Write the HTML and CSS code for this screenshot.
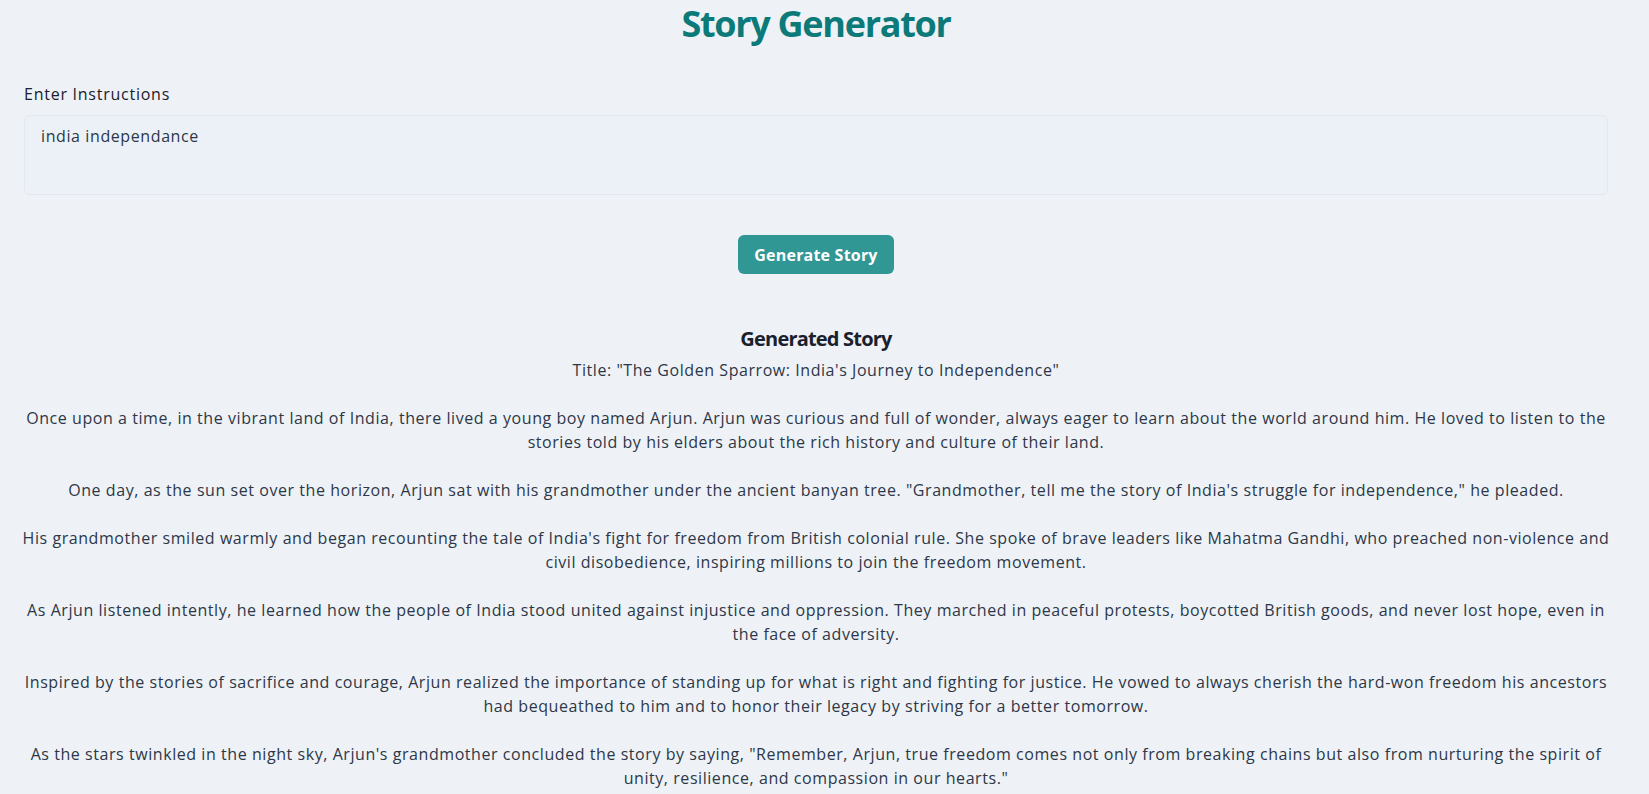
FILE: index.html
```html
<!DOCTYPE html>
<html lang="en">
<head>
<meta charset="utf-8">
<title>Story Generator</title>
<link rel="stylesheet" href="styles.css">
</head>
<body>
<main class="page">
  <h1 class="title">Story Generator</h1>
  <section class="form">
    <label class="label" for="instructions">Enter Instructions</label>
    <textarea id="instructions" class="input">india independance</textarea>
    <div class="actions">
      <button class="btn" type="button">Generate Story</button>
    </div>
  </section>
  <section class="result">
    <h2 class="result-heading">Generated Story</h2>
    <p class="story">Title: "The Golden Sparrow: India's Journey to Independence"

Once upon a time, in the vibrant land of India, there lived a young boy named Arjun. Arjun was curious and full of wonder, always eager to learn about the world around him. He loved to listen to the stories told by his elders about the rich history and culture of their land.

One day, as the sun set over the horizon, Arjun sat with his grandmother under the ancient banyan tree. "Grandmother, tell me the story of India's struggle for independence," he pleaded.

His grandmother smiled warmly and began recounting the tale of India's fight for freedom from British colonial rule. She spoke of brave leaders like Mahatma Gandhi, who preached non-violence and civil disobedience, inspiring millions to join the freedom movement.

As Arjun listened intently, he learned how the people of India stood united against injustice and oppression. They marched in peaceful protests, boycotted British goods, and never lost hope, even in the face of adversity.

Inspired by the stories of sacrifice and courage, Arjun realized the importance of standing up for what is right and fighting for justice. He vowed to always cherish the hard-won freedom his ancestors had bequeathed to him and to honor their legacy by striving for a better tomorrow.

As the stars twinkled in the night sky, Arjun's grandmother concluded the story by saying, "Remember, Arjun, true freedom comes not only from breaking chains but also from nurturing the spirit of unity, resilience, and compassion in our hearts."</p>
  </section>
</main>
</body>
</html>
```

FILE: styles.css
```css
html {
  scrollbar-width: none;
}

body {
  margin: 0;
  background: #eef2f6;
  color: #1a202c;
  font-family: "Open Sans", "Liberation Sans", sans-serif;
  letter-spacing: 0.56px;
}

.page {
  display: flex;
  flex-direction: column;
  padding: 2px 33px 0 16px;
}

.title {
  margin: 0;
  text-align: center;
  font-family: "Open Sans", sans-serif;
  font-weight: 700;
  font-size: 36px;
  line-height: 1.2;
  letter-spacing: -1.3px;
  color: #0b7a78;
}

.form {
  display: flex;
  flex-direction: column;
  padding: 37px 8px 0;
}

.label {
  font-size: 16px;
  line-height: 24px;
  font-weight: 500;
  letter-spacing: 0.75px;
  color: #1a202c;
  margin-bottom: 9px;
}

.input {
  box-sizing: border-box;
  height: 80px;
  width: 100%;
  padding: 8px 16px;
  border: 1px solid #e3e8f0;
  border-radius: 6px;
  background: #ecf1f8;
  font-family: "Open Sans", sans-serif;
  font-size: 16px;
  line-height: 24px;
  letter-spacing: 0.6px;
  color: #2d3748;
  resize: none;
  outline: none;
}

.actions {
  display: flex;
  justify-content: center;
  margin-top: 40px;
}

.btn {
  height: 39px;
  padding: 0 16px;
  border: none;
  border-radius: 6px;
  background: #319795;
  color: #ffffff;
  font-family: "Open Sans", sans-serif;
  font-weight: 700;
  font-size: 16px;
  letter-spacing: 0.2px;
  cursor: pointer;
}

.result {
  display: flex;
  flex-direction: column;
  align-items: center;
  padding-top: 53px;
}

.result-heading {
  margin: 0 0 7px;
  font-family: "Open Sans", sans-serif;
  font-weight: 700;
  font-size: 20px;
  line-height: 24px;
  letter-spacing: -0.8px;
  color: #1a202c;
}

.story {
  margin: 0;
  white-space: pre-wrap;
  text-align: center;
  font-size: 16px;
  line-height: 24px;
  color: #2d3748;
}
```
